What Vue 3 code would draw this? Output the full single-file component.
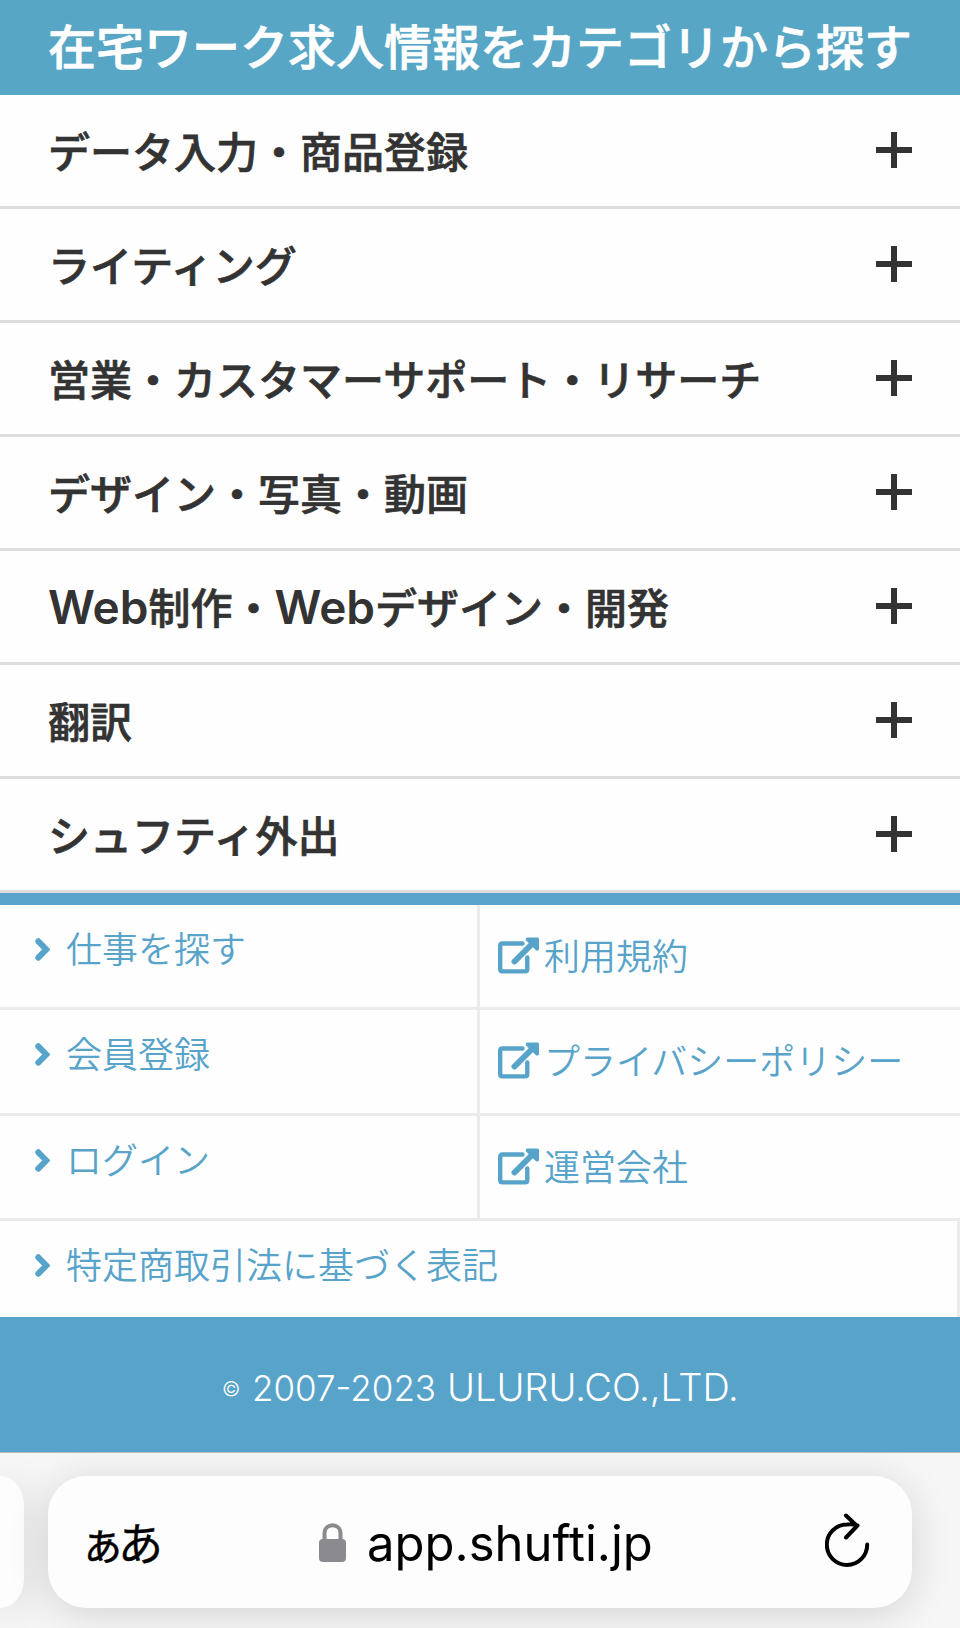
<template>
  <div class="page">
    <h2 class="heading">在宅ワーク求人情報をカテゴリから探す</h2>

    <ul class="categories">
      <li v-for="category in categories" :key="category" class="category">
        <span class="category-name">
          <span
            v-for="(part, i) in splitLatin(category)"
            :key="i"
            :class="{ latin: part === 'Web' }"
          >{{ part }}</span>
        </span>
        <span class="plus" />
      </li>
    </ul>

    <nav class="links">
      <a v-for="link in links" :key="link.label" class="link" :class="{ external: link.external, wide: link.wide }">
        <svg v-if="link.external" class="icon-external" viewBox="0 0 41 37">
          <path d="M24.5 6.5H4.5Q2.2 6.5 2.2 8.8V32Q2.2 34.4 4.5 34.4H27Q29.3 34.4 29.3 32V20.5" />
          <path class="arrow" d="M16.5 24.5 34 7" />
          <path class="head" d="M29 .5H39.5Q41 .5 41 2V12.5Q40.3 14 38 13.3L27.8 3.2Q27.3 1.2 29 .5Z" />
        </svg>
        <svg v-else class="icon-chevron" viewBox="0 0 15 23">
          <path d="M3.3 3.3 11.3 11.5 3.3 19.7" />
        </svg>
        <span>{{ link.label }}</span>
      </a>
    </nav>

    <footer class="footer">
      <small class="mark">©</small>
      <span class="years">2007-2023</span>
      <span class="company">ULURU.CO.,LTD.</span>
    </footer>

    <div class="browser-bar">
      <div class="prev-tab" />
      <div class="address">
        <div class="reader"><span class="reader-small">ぁ</span><span>あ</span></div>
        <div class="domain">
          <svg class="icon-lock" viewBox="0 0 27 39">
            <path d="M5.5 18V10.5C5.5-.4 21.5-.4 21.5 10.5V18" />
            <rect y="16" width="27" height="23" rx="4" />
          </svg>
          <span class="domain-name">app.shufti.jp</span>
        </div>
        <svg class="icon-reload" viewBox="0 0 46 56">
          <path d="M42.2 32.5A20.2 20.2 0 1 1 22 12.5Q28 12 32.500 13.500M21 3.500 32 14 21 25.500" />
        </svg>
      </div>
    </div>
  </div>
</template>

<script setup>
const categories = [
  'データ入力・商品登録',
  'ライティング',
  '営業・カスタマーサポート・リサーチ',
  'デザイン・写真・動画',
  'Web制作・Webデザイン・開発',
  '翻訳',
  'シュフティ外出'
]

const links = [
  { label: '仕事を探す' },
  { label: '利用規約', external: true },
  { label: '会員登録' },
  { label: 'プライバシーポリシー', external: true },
  { label: 'ログイン' },
  { label: '運営会社', external: true },
  { label: '特定商取引法に基づく表記', wide: true }
]

// keeps "Web" as its own part so it can have latin metrics
function splitLatin(text) {
  return text.split(/(Web)/).filter(Boolean)
}
</script>

<style>
body {
  margin: 0;
  background: #fefefe;
}
</style>

<style scoped>
.page {
  width: 960px;
  height: 1628px;
  overflow: hidden;
  display: flex;
  flex-direction: column;
  background: #fefefe;
  color: #333;
  font-family: "Noto Sans CJK JP", sans-serif;
}

.heading {
  flex: none;
  height: 95px;
  margin: 0;
  padding-left: 48px;
  background: #58a6c5;
  color: #fff;
  font-size: 48px;
  font-weight: 500;
  line-height: 89px;
  white-space: nowrap;
  -webkit-text-stroke: 0.7px currentColor;
}

/* Categories */
.categories {
  margin: 0;
  padding: 0;
  list-style: none;
}

.category {
  box-sizing: border-box;
  height: 114px;
  padding: 0 48px 1px;
  display: flex;
  align-items: center;
  justify-content: space-between;
  border-bottom: 3px solid #ddd;
  font-size: 42px;
  font-weight: 500;
  line-height: 60px;
  white-space: nowrap;
  -webkit-text-stroke: 0.7px currentColor;
}

.category-name {
  height: 61px;
}

.latin {
  font-family: Inter, sans-serif;
  font-size: 46px;
  font-weight: 600;
  line-height: 1;
  -webkit-text-stroke: 0;
}

.plus {
  width: 36px;
  height: 36px;
  background:
    linear-gradient(#333, #333) center / 36px 6px no-repeat,
    linear-gradient(#333, #333) center / 6px 36px no-repeat;
}

/* Links */
.links {
  flex: none;
  box-sizing: border-box;
  height: 424px;
  display: grid;
  grid-template-columns: 480px 480px;
  grid-template-rows: repeat(3, 105.33px) 96px;
  border-top: 12px solid #58a3c9;
}

.link {
  box-sizing: border-box;
  display: flex;
  align-items: flex-start;
  padding: 20px 0 0 35px;
  border-right: 3px solid #ebebeb;
  border-bottom: 3px solid #ebebeb;
  color: #58a3c9;
  font-size: 36px;
  font-weight: 350;
  line-height: 44px;
  white-space: nowrap;
}

.link.external {
  padding: 27px 0 0 18px;
  border-right: 0;
}

.link.wide {
  grid-column: 1 / 3;
  border-bottom: 0;
}

.icon-chevron {
  width: 15px;
  height: 23px;
  margin: 13px 16px 0 0;
  fill: none;
  stroke: currentColor;
  stroke-width: 6;
  stroke-linecap: round;
}

.icon-external {
  width: 41px;
  height: 37px;
  margin: 5px 5px 0 0;
  fill: none;
  stroke: currentColor;
  stroke-width: 4.4;
  stroke-linecap: round;
}

.icon-external .arrow {
  stroke-width: 6;
}

.icon-external .head {
  fill: currentColor;
  stroke: none;
}

/* Footer */
.footer {
  flex: none;
  box-sizing: border-box;
  height: 136px;
  padding: 0 0 0 222px;
  display: flex;
  align-items: baseline;
  border-bottom: 1px solid #b9bcbc;
  background: #58a3c9;
  color: #fff;
  font-family: Inter, sans-serif;
  font-weight: 300;
  line-height: 141px;
  white-space: nowrap;
}

.mark {
  width: 30px;
  font-size: 20px;
  line-height: 20px;
  transform: translateY(-5px);
}

.years {
  width: 195px;
  font-size: 35px;
}

.company {
  font-size: 38px;
}

/* Browser bar */
.browser-bar {
  flex: none;
  height: 175px;
  display: flex;
  gap: 24px;
  padding-top: 23px;
  box-sizing: border-box;
  overflow: hidden;
  background: #f6f6f6;
}

.prev-tab,
.address {
  box-sizing: border-box;
  height: 132px;
  background: #fdfdfd;
  box-shadow: 0 6px 40px rgba(0, 0, 0, 0.14);
}

.prev-tab {
  width: 24px;
  border-radius: 0 36px 36px 0 / 0 44px 44px 0;
}

.address {
  width: 864px;
  padding: 0 41px 0 32px;
  display: flex;
  align-items: center;
  border-radius: 38px;
  color: #000;
}

.reader {
  width: 239px;
  font-size: 45px;
  font-weight: 400;
  line-height: 60px;
  white-space: nowrap;
  -webkit-text-stroke: 0.4px currentColor;
}

.reader-small {
  letter-spacing: -7px;
}

.domain {
  display: flex;
  align-items: center;
  gap: 21px;
  font-family: Inter, sans-serif;
  font-size: 49px;
  line-height: 60px;
}

.domain-name {
  padding-top: 4px;
}

.icon-lock {
  width: 27px;
  height: 39px;
  fill: #8a8a8f;
}

.icon-lock path {
  fill: none;
  stroke: #8a8a8f;
  stroke-width: 4;
}

.icon-reload {
  width: 46px;
  height: 56px;
  margin: 0 0 5px auto;
  fill: none;
  stroke: #000;
  stroke-width: 4;
  stroke-linecap: round;
  stroke-linejoin: round;
}
</style>
